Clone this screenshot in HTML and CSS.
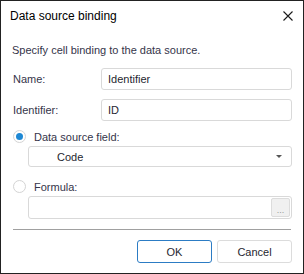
FILE: index.html
```html
<!DOCTYPE html>
<html lang="en">
<head>
    <meta charset="UTF-8">
    <title>Data source binding</title>
    <link rel="stylesheet" href="styles.css">
</head>
<body>

<div class="dialog">
    <!-- Title bar -->
    <div class="titlebar">
        <span class="title">Data source binding</span>
        <svg class="close" width="10" height="10" viewBox="0 0 10 10">
            <path d="M0.5 0.5 L9.5 9.5 M9.5 0.5 L0.5 9.5" stroke="#1a1a1a" stroke-width="1.1"/>
        </svg>
    </div>

    <div class="content">
        <div class="intro">Specify cell binding to the data source.</div>

        <div class="row">
            <label class="label">Name:</label>
            <div class="field">Identifier</div>
        </div>
        <div class="row">
            <label class="label">Identifier:</label>
            <div class="field">ID</div>
        </div>

        <div class="option">
            <span class="radio checked"></span>
            <span>Data source field:</span>
        </div>
        <div class="combo">
            <span class="combo-text">Code</span>
            <svg class="arrow" width="6" height="3" viewBox="0 0 6 3">
                <path d="M0 0 H6 L3 3 Z" fill="#555"/>
            </svg>
        </div>

        <div class="option">
            <span class="radio"></span>
            <span>Formula:</span>
        </div>
        <div class="combo formula">
            <span class="dots">...</span>
        </div>

        <div class="separator"></div>

        <div class="buttons">
            <button class="btn primary">OK</button>
            <button class="btn">Cancel</button>
        </div>
    </div>
</div>

</body>
</html>
```

FILE: styles.css
```css
/* Global */
body {
    margin: 0;
    background: #fff;
    font-family: "Liberation Sans", Arial, sans-serif;
    font-size: 11px;
    color: #35354a;
}

.dialog {
    box-sizing: border-box;
    width: 304px;
    height: 274px;
    border: 1px solid #222;
    background: #fff;
}

/* Title bar */
.titlebar {
    height: 30px;
    display: flex;
    align-items: center;
    justify-content: space-between;
    padding: 0 10px 0 9px;
}

.title {
    font-size: 12px;
    color: #000;
}

/* Content */
.content {
    padding: 0 11px 0 11px;
}

.intro {
    margin-top: 12px;
    margin-bottom: 11px;
    line-height: 14px;
}

.row {
    display: flex;
    align-items: center;
    margin-bottom: 9px;
}

.row + .row {
    margin-top: 1px;
}

.label {
    width: 88px;
    padding-left: 1px;
}

.field {
    box-sizing: border-box;
    flex: 1;
    height: 22px;
    border: 1px solid #d9d9d9;
    border-radius: 3px;
    padding: 0 6px;
    line-height: 20px;
    color: #1f1f30;
}

/* Radio options */
.option {
    display: flex;
    align-items: center;
    gap: 8px;
    padding-left: 1px;
    height: 13px;
    margin-top: 1px;
}

.radio {
    box-sizing: border-box;
    width: 13px;
    height: 13px;
    border-radius: 50%;
    border: 1px solid #d4d4d4;
    background: #fff;
    position: relative;
}

.radio.checked::after {
    content: "";
    position: absolute;
    left: 2px;
    top: 2px;
    width: 7px;
    height: 7px;
    border-radius: 50%;
    background: #1e88d4;
}

.combo {
    box-sizing: border-box;
    height: 21px;
    margin: 3px 0 13px 16px;
    border: 1px solid #d9d9d9;
    border-radius: 3px;
    display: flex;
    align-items: center;
    justify-content: space-between;
    padding: 0 9px 0 28px;
    color: #1f1f30;
}

.combo.formula {
    height: 23px;
    margin-bottom: 0;
    justify-content: flex-end;
    padding: 0 1px 0 0;
}

.dots {
    box-sizing: border-box;
    width: 19px;
    height: 19px;
    background: #f0f0f0;
    border: 1px solid #dcdcdc;
    border-radius: 2px;
    color: #999;
    font-size: 9px;
    text-align: center;
    line-height: 22px;
}

.separator {
    height: 1px;
    background: #a0a0a0;
    margin: 10px 1px 0 1px;
}

/* Buttons */
.buttons {
    display: flex;
    justify-content: flex-end;
    gap: 5px;
    margin-top: 10px;
}

.btn {
    box-sizing: border-box;
    width: 75px;
    height: 23px;
    background: #fff;
    border: 1px solid #dcdcdc;
    border-radius: 3px;
    font-family: "Liberation Sans", Arial, sans-serif;
    font-size: 11px;
    color: #1f1f30;
    padding: 0;
}

.btn.primary {
    border-color: #2c7cc4;
}
```
